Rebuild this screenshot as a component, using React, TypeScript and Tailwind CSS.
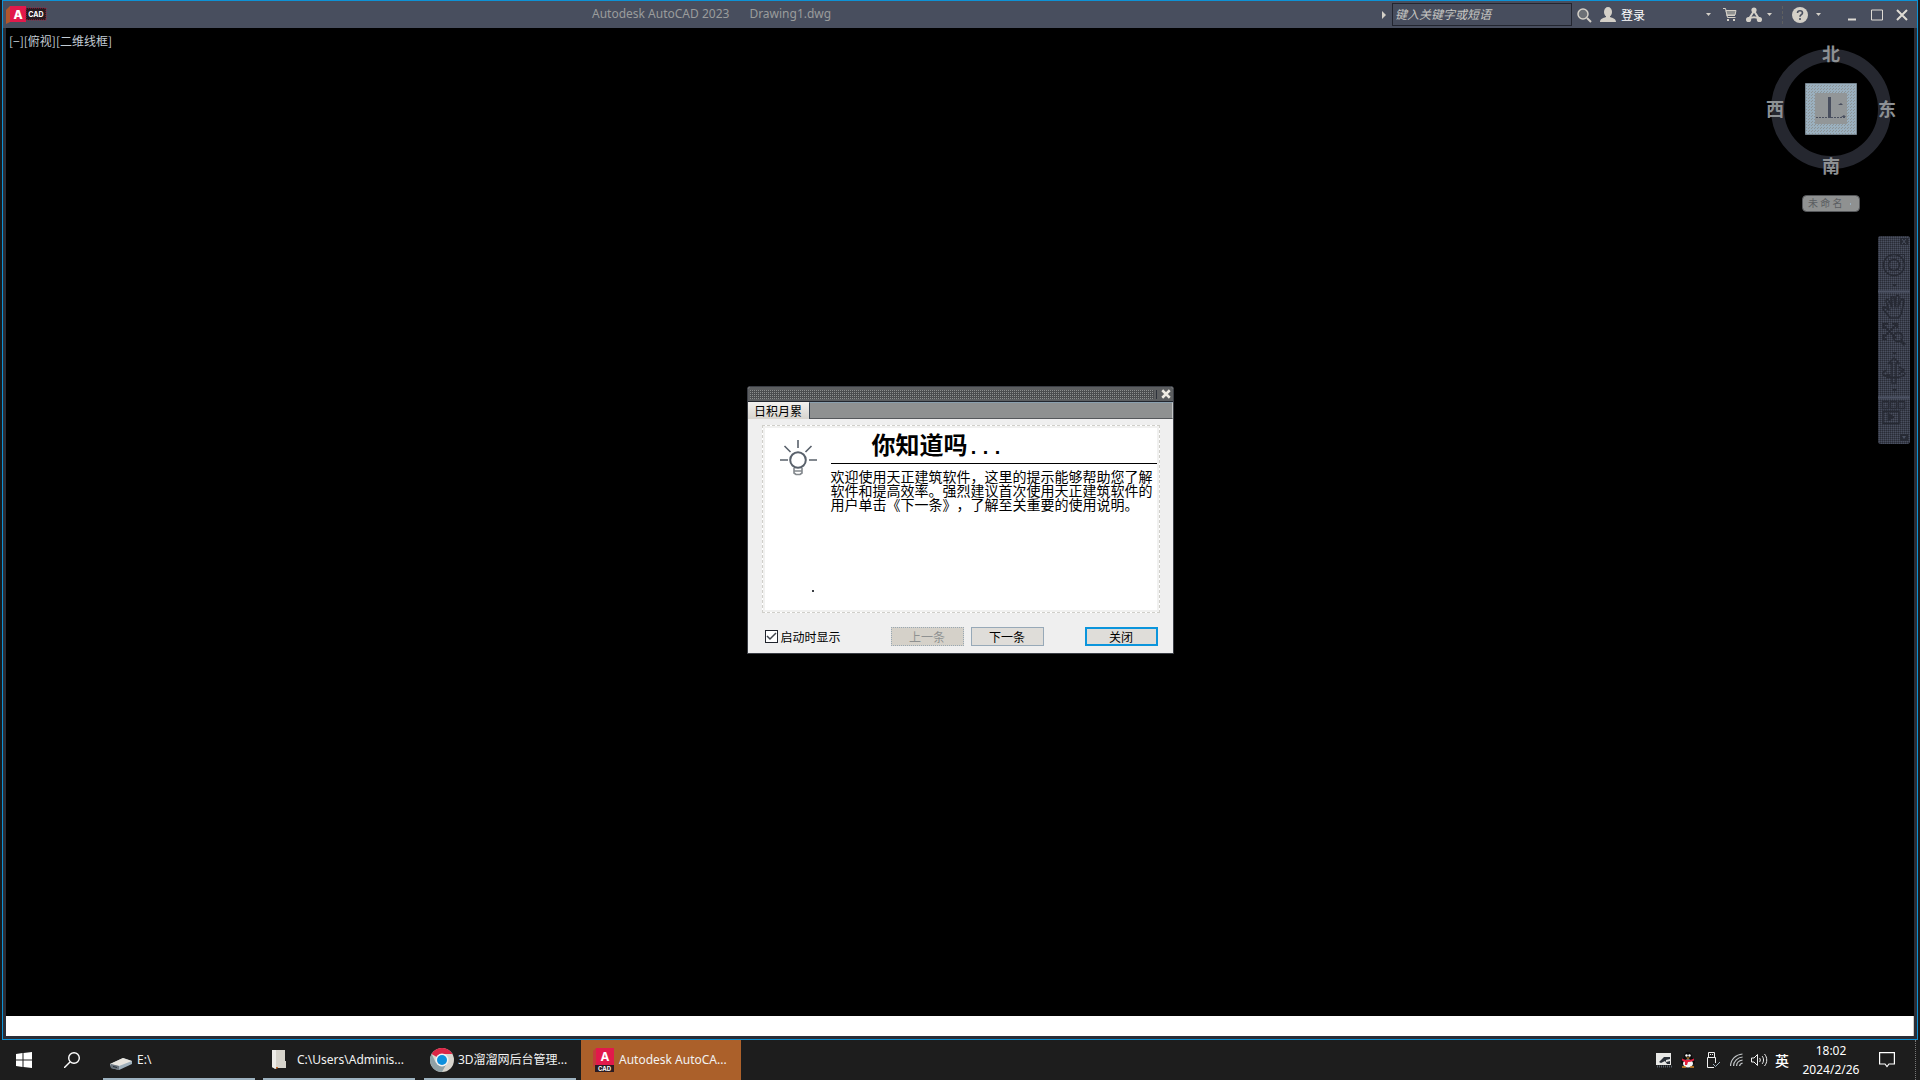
import type { ReactNode } from "react";

const ui = "font-['Noto_Sans','Noto_Sans_CJK_SC',sans-serif]";
const cjk = "font-['Noto_Sans_CJK_SC',sans-serif]";

function Caret() {
  return (
    <svg viewBox="0 0 5 3" className="h-[3px] w-[5px] shrink-0" fill="#d4d0c8">
      <path d="M0 0h5L2.5 3z" />
    </svg>
  );
}

function TitleBar() {
  return (
    <header className="relative flex h-[27px] shrink-0 items-center bg-[#484e5e] text-[#d6d3cb]">
      <svg viewBox="0 0 42 18" className="ml-[3px] h-[18px] w-[42px]" role="img" aria-label="AutoCAD">
        <path d="M0 4 4 0v16l-4 2z" fill="#b0562c" />
        <path d="M4 0h16v16H4z" fill="#e2194b" />
        <path d="M20 2h20v12H20z" fill="#271a20" />
        <path d="M20 2h20v12H20z" fill="none" stroke="#a81c3c" strokeDasharray="1 1" />
        <text x="12" y="12.500" textAnchor="middle" fill="#fff" fontFamily="Inter" fontWeight="800" fontSize="12">A</text>
        <text x="30" y="11" textAnchor="middle" fill="#fff" fontFamily="Inter" fontWeight="700" fontSize="7">CAD</text>
      </svg>
      <h1 className={`absolute top-[5px] left-[589px] flex gap-5 text-[12px] leading-4 text-[#9a9c9c] ${ui}`}>
        <span>Autodesk AutoCAD 2023</span>
        <span>Drawing1.dwg</span>
      </h1>
      <div className="ml-auto flex h-full items-center">
        <svg viewBox="0 0 4 8" className="mr-[6px] h-2 w-1" fill="#d4d0c8"><path d="M0 0l4 4-4 4z" /></svg>
        <input
          aria-label="键入关键字或短语"
          placeholder="键入关键字或短语"
          className={`h-[23px] w-[180px] border border-[#22252f] bg-[#474d5d] px-[2px] pb-[3px] text-[12px] italic placeholder:text-[#c8c8c4] ${cjk}`}
        />
        <button aria-label="搜索" className="ml-1">
          <svg viewBox="0 0 16 16" className="size-4" fill="none" stroke="#d4d0c8">
            <circle cx="7" cy="7" r="5" fill="#6c7076" strokeWidth="1.500" />
            <path d="m11 11 4 4" strokeWidth="2" />
          </svg>
        </button>
        <button className={`ml-2 flex items-center gap-[5px] text-[12px] leading-4 text-white ${cjk}`}>
          <svg viewBox="0 0 16 16" className="size-4" fill="#d4d0c8">
            <ellipse cx="8" cy="5" rx="4" ry="5" />
            <path d="M6 8h4v2c3 1 6 2 6 5H0c0-3 3-4 6-5z" />
          </svg>
          登录
        </button>
        <button aria-label="帐户菜单" className="ml-[61px]"><Caret /></button>
        <button aria-label="商店" className="ml-3">
          <svg viewBox="0 0 14 15" className="h-[15px] w-[14px]" fill="none" stroke="#d4d0c8">
            <path d="M0 1.500h2.500l2 9h8M3.500 8.500h8.500" />
            <path d="M3 3.500h10L12 8H4z" fill="#8e9090" />
            <path d="M4 12h2v2H4zM10 12h2v2h-2z" fill="#d4d0c8" stroke="none" />
          </svg>
        </button>
        <button aria-label="Autodesk App Store" className="ml-[9px] flex items-center gap-[5px]">
          <svg viewBox="0 0 16 16" className="size-4" fill="none" stroke="#d4d0c8" strokeWidth="2">
            <path d="M8 4 2.500 12.500M8 4l5.500 8.500M3 12c3-2 7-2 10 0" />
            <g fill="#d4d0c8" stroke="none"><circle cx="8" cy="3" r="2.600" /><circle cx="2.600" cy="12.500" r="2.600" /><circle cx="13.400" cy="12.500" r="2.600" /></g>
          </svg>
          <Caret />
        </button>
        <span className="ml-[10px] h-[18px] border-l border-dashed border-[#5f6060]" />
        <button aria-label="帮助" className="ml-[9px] flex items-center gap-[8px]">
          <svg viewBox="0 0 16 16" className="size-4">
            <circle cx="8" cy="8" r="8" fill="#d4d0c8" />
            <path d="M5.500 6c0-3 5-3 5 0 0 1.600-2.500 1.800-2.500 3.700M8 11v2" fill="none" stroke="#484e5e" strokeWidth="1.600" />
          </svg>
          <Caret />
        </button>
        <div className="mr-[9px] ml-[25px] flex items-center gap-[13px]">
          <button aria-label="最小化"><svg viewBox="0 0 12 12" className="size-3"><path d="M2 10.500h8" stroke="#dedbd4" strokeWidth="2" /></svg></button>
          <button aria-label="最大化"><svg viewBox="0 0 12 12" className="size-3"><path d="M.500 1h11v10H.500z" fill="none" stroke="#dedbd4" /></svg></button>
          <button aria-label="关闭窗口"><svg viewBox="0 0 12 12" className="size-3"><path d="m1 1 10 10M11 1 1 11" stroke="#dedbd4" strokeWidth="2" /></svg></button>
        </div>
      </div>
    </header>
  );
}

function ViewCube() {
  return (
    <svg viewBox="0 0 140 178" className="absolute top-[12px] right-[13px] h-[178px] w-[140px]" role="img" aria-label="ViewCube">
      <defs>
        <pattern id="dots" width="3" height="3" patternUnits="userSpaceOnUse">
          <path d="M0 0h1v1H0zM2 1h1v1H2z" fill="#8d9598" />
        </pattern>
      </defs>
      <circle cx="70" cy="69" r="53.500" fill="none" stroke="#25272f" strokeWidth="13" />
      <path d="M44.500 43.500h51v51h-51z" fill="#9bb0bf" stroke="#76848e" />
      <path d="M45 44h50v50H45z" fill="url(#dots)" />
      <path d="M54 53h32v31H54z" fill="#929698" />
      <path d="M55 77.500h30" stroke="#4a5060" strokeDasharray="2 1" />
      <path d="M68.500 57v21" stroke="#484e5e" strokeWidth="3" />
      <path d="M77 65l3-2 2 2zM80 77l3-2 2 2z" fill="#484e5e" />
      <g fill="#8e9194" fontFamily="Noto Sans CJK SC" fontSize="18" fontWeight="700" textAnchor="middle">
        <text x="70" y="21">北</text>
        <text x="14" y="76">西</text>
        <text x="126" y="76">东</text>
        <text x="70" y="133">南</text>
      </g>
      <rect x="41.500" y="155.500" width="57" height="16" rx="4" fill="#8f9191" stroke="#55575a" />
      <text x="47" y="167" fill="#5b5e61" fontFamily="Noto Sans CJK SC" fontSize="10">未 命 名</text>
      <path d="M89 163h1v2h-1z" fill="#9bb0bf" />
    </svg>
  );
}

function NavBar() {
  return (
    <svg viewBox="0 0 32 208" className="absolute top-[208px] right-[4px] h-[208px] w-8" role="img" aria-label="导航栏" fill="none" stroke="#272a34">
      <defs>
        <pattern id="mesh" width="2" height="2" patternUnits="userSpaceOnUse">
          <path d="M0 0h1v1H0z" fill="#383d4a" />
        </pattern>
      </defs>
      <rect width="32" height="208" rx="3" fill="#4a5060" stroke="none" />
      <rect width="32" height="208" rx="3" fill="url(#mesh)" stroke="none" />
      <path d="M0 55.500h32M0 161.500h32" stroke="#4f5566" strokeWidth="2" />
      <path d="M22 2h8v7h-8z" fill="#272a34" stroke="none" />
      <path d="m24 3 4 5m0-5-4 5" stroke="#4a5060" />
      <circle cx="16" cy="29" r="10.500" strokeWidth="1.500" />
      <circle cx="16" cy="29" r="5.500" strokeWidth="1.500" />
      <path d="M17 18.500h9.500V29M10 35l2-2M22 35l-2-2M10 23l2 2" />
      <g fill="#272a34" stroke="none">
        <path d="M14 48h5l-2.500 3zM14 116h5l-2.500 3zM14 153h5l-2.500 3z" />
      </g>
      <path d="M12 82c-2-4-5-6-7-9-1-2 1-3 3-1l3 2-3-9c0-2 2-2 3 0l3 6-1-9c0-2 3-2 3 0l1 9 1-10c0-2 3-2 3 0l-1 10 3-7c1-2 3-1 3 1l-2 10c0 4-2 5-4 7z" strokeWidth="1.600" strokeLinejoin="round" />
      <path d="m5 89 13 13M18 89 5 102M5 93v-5h5M14 88h5v4M5 98v5h4" strokeWidth="1.800" />
      <circle cx="20" cy="101" r="4.500" strokeWidth="1.800" />
      <path d="m23 105 4 4" strokeWidth="3" />
      <path d="M14 147v-20h-3l5-5 5 5h-3v20z" strokeWidth="1.500" />
      <path d="M9 134c-5 2-6 5-1 6 5 2 12 2 17 0 4-2 1-5-4-6m0-3 5 3-5 4" strokeWidth="1.500" />
      <circle cx="10" cy="140" r="2" fill="#272a34" />
      <path d="M4.500 165.500h6v7h-6zM12.500 165.500h6v7h-6zM20.500 165.500h6v7h-6zM5 175.500h16v12H5z" strokeWidth="1.500" />
      <path d="M10 177v8l6-4z" fill="#272a34" />
      <path d="M22 198h8v7h-8z" fill="#272a34" stroke="none" />
      <path d="M24 200h4l-2 3z" fill="#4a5060" stroke="none" />
    </svg>
  );
}

function TipDialog() {
  const button = "h-[19px] w-[73px] border text-[12px] leading-4";
  return (
    <section role="dialog" aria-label="日积月累" className={`w-[427px] rounded-t-[3px] border border-[#3a3d44] bg-[#efefef] text-black ${cjk}`}>
      <div className="flex h-[15px] items-center rounded-t-[2px] border-b border-[#22262e] bg-[#5c5e60] pl-[2px]">
        <div className="h-[9px] flex-1 bg-[radial-gradient(circle_at_0.5px_0.5px,#8d8f8f_0.7px,#4b4d4f_0.8px)] bg-[size:2px_2px]" />
        <span className="mx-[2px] h-[9px] w-px bg-[#2e323b]" />
        <button aria-label="关闭对话框" className="px-[2px]">
          <svg viewBox="0 0 8 8" className="size-[10px]"><path d="m1 1 6 6M7 1 1 7" stroke="#efece4" strokeWidth="2" /></svg>
        </button>
      </div>
      <div role="tablist" className="flex h-[17px]">
        <button role="tab" aria-selected="true" className="w-[61px] bg-linear-to-b from-[#f2f1ef] to-[#d8d4ce] text-[12px] leading-[17px]">日积月累</button>
        <div className="flex-1 border border-r-[#c4c6c6] border-t-[#8ba0ae] border-b-[#55585b] border-l-[#3a4552] bg-[#8f9191]" />
      </div>
      <div className="pt-[6px] pr-[13px] pb-[7px] pl-[14px]">
        <div className="relative flex h-[188px] w-full border border-dashed border-[#d0cfca] bg-white outline-2 -outline-offset-3 outline-[#f1f1f0]">
          <svg viewBox="0 0 38 36" className="mt-[14px] ml-[16px] h-9 w-[38px] shrink-0" fill="none" stroke="#59616b" strokeWidth="1.600" role="img" aria-label="灯泡">
            <circle cx="19" cy="20" r="7.800" strokeWidth="2" />
            <path d="M19 0v8M5.500 6l6 6M32.500 6l-6 6M1 20h8M30 20h8" />
            <path d="M15 28v5l2 1.500h4l2-1.500v-5M15 31h8" stroke="#83888d" />
          </svg>
          <div className="ml-auto w-[328px] pr-[2px]">
            <h2 className="h-[38px] border-b border-black pl-[41px] text-[24px] leading-[36px] font-bold">
              <span>你知道吗</span><span className="font-['Liberation_Mono',monospace] text-[20px]">...</span>
            </h2>
            <p className="mt-[5px] text-[14px] leading-[14px] [text-spacing-trim:space-all]">欢迎使用天正建筑软件，这里的提示能够帮助您了解软件和提高效率。强烈建议首次使用天正建筑软件的用户单击《下一条》，了解至关重要的使用说明。</p>
          </div>
          <span className="absolute bottom-5 left-[49px] size-[2px] bg-[#3c4046]" />
        </div>
        <div className="mt-[14px] flex items-center pl-[3px]">
          <label className="flex items-center gap-[3px] text-[12px] leading-4">
            <span className="relative size-[13px]">
              <input type="checkbox" defaultChecked className="peer block size-[13px] appearance-none border border-[#20242d] bg-white" />
              <svg viewBox="0 0 13 13" className="pointer-events-none absolute inset-0 hidden size-[13px] peer-checked:block"><path d="m2 6 3 3 6-6" fill="none" stroke="#3f444c" strokeWidth="1.500" /></svg>
            </span>
            启动时显示
          </label>
          <button disabled className={`${button} ml-auto border-dotted border-[#98a8b4] bg-[#d5d1c9] text-[#8f9191]`}>上一条</button>
          <button className={`${button} ml-[7px] border-[#97a9b8] bg-[#dfddd9]`}>下一条</button>
          <button className="mr-[2px] ml-[41px] h-[19px] w-[73px] border-2 border-[#0b95dc] bg-[#dfddd9] text-[12px] leading-[14px]">关闭</button>
        </div>
      </div>
    </section>
  );
}

function Task({ icon, label, className = "" }: { icon: ReactNode; label: string; className?: string }) {
  return (
    <button className={`flex h-10 w-[152px] items-center border-b-2 pt-[2px] text-left text-[12px] whitespace-nowrap text-[#f2f2f2] ${className}`}>
      {icon}
      <span>{label}</span>
    </button>
  );
}

function Taskbar() {
  return (
    <footer className={`flex h-10 shrink-0 items-center bg-[#1d1d1d] text-white ${ui}`}>
      <button aria-label="开始" className="px-4">
        <svg viewBox="0 0 16 16" className="size-4" fill="#fff"><path d="M0 2l6.500-1v6.500H0zM7.500 1 16 0v7.500H7.500zM0 8.500h6.500V15L0 14zM7.500 8.500H16V16l-8.500-1z" /></svg>
      </button>
      <button aria-label="搜索" className="px-4">
        <svg viewBox="0 0 16 16" className="size-4" fill="none" stroke="#fff" strokeWidth="1.400"><circle cx="10" cy="6" r="5.300" /><path d="M6 10 0 16" /></svg>
      </button>
      <Task
        className="ml-[7px] border-[#9db2c0] pl-[7px]"
        label="E:\"
        icon={
          <svg viewBox="0 0 22 12" className="mt-2 mr-[5px] h-3 w-[22px]">
            <path d="M0 6 13 0l9 3v3L9 12 1 10z" fill="#9fb0bc" />
            <path d="M0 6 13 0l9 3L9 8z" fill="#e8e5df" />
            <path d="m1 6 8 2v4l-8-2z" fill="#6a737c" />
            <path d="m3 8 4 1v1L3 9z" fill="#25303c" />
          </svg>
        }
      />
      <Task
        className="ml-2 border-[#9db2c0] pl-[9px]"
        label="C:\Users\Adminis..."
        icon={
          <svg viewBox="0 0 15 20" className="mr-[10px] h-5 w-[15px]">
            <path d="M0 0h13v11h1v7H4l-1 1-3-2z" fill="#d6d3cb" />
            <path d="M0 0h4v19l-4-2z" fill="#eeece8" />
            <path d="M4 17h2v1l-2 1z" fill="#c46a2b" />
          </svg>
        }
      />
      <Task
        className="ml-[9px] border-[#9db2c0] pl-[6px]"
        label="3D溜溜网后台管理..."
        icon={
          <svg viewBox="0 0 24 24" className="mr-1 size-6">
            <circle cx="12" cy="12" r="12" fill="#d8d5ce" />
            <path d="M12 12 1.600 6A12 12 0 0 1 22.400 6H12z" fill="#dc2546" />
            <path d="M1.600 6A12 12 0 0 0 12 24l5-9-5 3-6-3z" fill="#8fa1a6" />
            <circle cx="12" cy="12" r="6.500" fill="#f3f3f3" />
            <circle cx="12" cy="12" r="5" fill="#0d8fdc" />
          </svg>
        }
      />
      <Task
        className="ml-[5px] w-[160px] border-[#ab602a] bg-[#ab602a] pl-[12px]"
        label="Autodesk AutoCA..."
        icon={
          <svg viewBox="0 0 21 24" className="mr-[5px] h-6 w-[21px]">
            <path d="M0 3 3 0v17l-3 2z" fill="#c23c3a" />
            <path d="M3 0h18v17H3z" fill="#e2194b" />
            <path d="M2 17h19v7H2z" fill="#2b1b22" />
            <text x="12" y="13" textAnchor="middle" fill="#fff" fontFamily="Inter" fontWeight="700" fontSize="12">A</text>
            <text x="11.500" y="23" textAnchor="middle" fill="#fff" fontFamily="Inter" fontWeight="700" fontSize="6">CAD</text>
          </svg>
        }
      />
      <div className="ml-auto flex h-full items-center">
        <svg viewBox="0 0 16 15" className="h-[15px] w-4"><path d="M0 0h15v12H0z" fill="#e8e8e6" /><path d="M3 9 8 4h6v2l-4 1v2l4-1v3h-3L9 8 5 10z" fill="#2a3038" /><path d="M1 13.500h15" stroke="#57606a" strokeWidth="2" strokeDasharray="1 1" /></svg>
        <svg viewBox="0 0 16 16" className="ml-2 size-4">
          <path d="M4 5c0-7 8-7 8 0l3 5-1 2H2l-1-2z" fill="#0b0b0b" />
          <ellipse cx="8" cy="11.500" rx="5" ry="4" fill="#f4f4f4" />
          <circle cx="6.500" cy="3.500" r="1.200" fill="#fff" /><circle cx="9.500" cy="3.500" r="1.200" fill="#fff" />
          <path d="M6 5.500h4L8 7z" fill="#e59a2a" />
          <path d="M2 6.500c4 2 8 2 12 0v2c-2 1-4 1.500-6 1.500l-1 3H5v-3L2 8.500z" fill="#e2203f" />
          <path d="M2 15h4M10 15h4" stroke="#d98a2a" strokeWidth="1.500" />
        </svg>
        <svg viewBox="0 0 14 16" className="ml-[10px] h-4 w-[14px]" fill="none" stroke="#f0f0f0"><path d="M2.500 5V.500h6V5M8 15.500H1.500V5.500h8V11" /><path d="M4 2.500h1M6 2.500h1" /><path d="m7 12 2.500 2.500L14 10" stroke="#9db2c0" /></svg>
        <svg viewBox="0 0 13 14" className="ml-[10px] h-[14px] w-[13px]" fill="none" stroke="#c4c8ca" strokeWidth="1.200"><path d="M.600 13C.600 6 6 1.500 12.500 1M3.600 13c0-5 4-8.500 9-9M6.600 13c0-3.500 2.600-5.500 6-6M9.600 13c0-1.500 1.400-2.500 3-3" /></svg>
        <svg viewBox="0 0 17 14" className="ml-2 h-[14px] w-[17px]" fill="none" stroke="#f0f0f0"><path d="M.500 5v4H3l3.500 3.500v-11L3 5zM8.500 5c1 1 1 3 0 4M11 3c2 2 2 6 0 8M13.500 1c3 3.500 3 8.500 0 12" /></svg>
        <button className={`ml-[7px] text-[14px] leading-5 font-medium ${cjk}`}>英</button>
        <div className="ml-[12px] w-[60px] text-center text-[12px] leading-[19px] whitespace-nowrap">
          <div>18:02</div>
          <div>2024/2/26</div>
        </div>
        <button aria-label="通知" className="mr-5 ml-[18px]"><svg viewBox="0 0 16 16" className="size-4" fill="none" stroke="#fff" strokeWidth="1.200"><path d="M.600.600h14.800V12H10l-2 2.500L6 12H.600z" /></svg></button>
        <span className="mr-1 h-full border-l border-dotted border-[#777]" />
      </div>
    </footer>
  );
}

export default function App() {
  return (
    <div className="flex h-screen flex-col overflow-hidden bg-black">
      <div className="flex min-h-0 flex-1 bg-[#191a1c] px-[2px]">
        <main className="relative flex flex-1 flex-col border border-[#0d92d6] bg-[#2a2d36]">
          <TitleBar />
          <div className="mx-[3px] mb-[3px] flex flex-1 flex-col">
            <div className="relative flex-1 bg-black">
              <p className={`px-[3px] pt-[6px] text-[12px] leading-[14px] text-[#c3ccd4] ${cjk}`}>[−][俯视][二维线框]</p>
              <ViewCube />
              <NavBar />
            </div>
            <div className="h-5 border-r border-[#d0cfca] bg-white" />
          </div>
          <div className="absolute inset-0 flex items-center justify-center">
            <TipDialog />
          </div>
        </main>
      </div>
      <Taskbar />
    </div>
  );
}
